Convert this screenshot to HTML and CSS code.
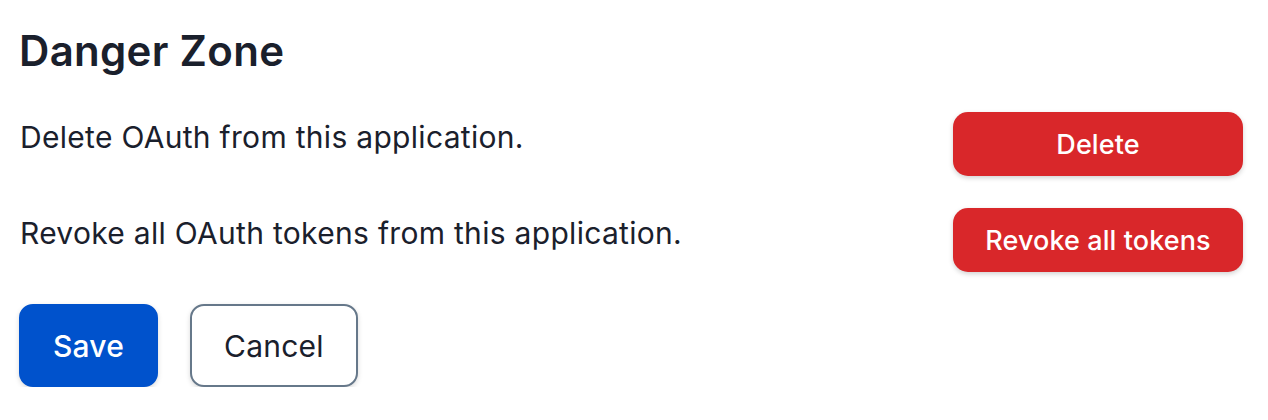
FILE: index.html
```html
<!DOCTYPE html>
<html lang="en">
<head>
<meta charset="utf-8">
<title>Danger Zone</title>
<link rel="stylesheet" href="styles.css">
</head>
<body>
<main class="page">
  <h1 class="title">Danger Zone</h1>
  <div class="row">
    <p class="desc">Delete OAuth from this application.</p>
    <button class="btn-danger" type="button">Delete</button>
  </div>
  <div class="row">
    <p class="desc">Revoke all OAuth tokens from this application.</p>
    <button class="btn-danger" type="button">Revoke all tokens</button>
  </div>
  <div class="actions">
    <button class="btn btn-primary" type="button">Save</button>
    <button class="btn btn-secondary" type="button">Cancel</button>
  </div>
</main>
</body>
</html>
```
FILE: styles.css
```css
* { box-sizing: border-box; }
html, body { margin: 0; background: #ffffff; }
body {
  font-family: Inter, "Noto Sans", "Liberation Sans", sans-serif;
  color: #1a202c;
}
.page {
  padding: 27px 25px 0 19px;
}
.title {
  margin: 0;
  font-size: 42px;
  line-height: 48px;
  font-weight: 600;
  letter-spacing: 0.3px;
}
.row {
  display: flex;
  justify-content: space-between;
  align-items: flex-start;
  margin-top: 37px;
}
.row + .row { margin-top: 32px; }
.desc {
  margin: 3px 0 0 1px;
  font-size: 30px;
  line-height: 45px;
  letter-spacing: 0.3px;
}
.btn-danger {
  width: 290px;
  height: 64px;
  border: none;
  border-radius: 15px;
  background: #d9272a;
  color: #ffffff;
  font-family: inherit;
  font-size: 27px;
  font-weight: 500;
  letter-spacing: 0.1px;
  box-shadow: 0 2px 5px rgba(0, 0, 0, 0.18);
}
.actions {
  display: flex;
  gap: 32px;
  margin-top: 32px;
}
.btn {
  height: 83px;
  padding: 0 32px;
  border: 2px solid transparent;
  border-radius: 14px;
  font-family: inherit;
  font-size: 30px;
  letter-spacing: 0.2px;
  box-shadow: 0 2px 5px rgba(0, 0, 0, 0.15);
}
.btn-primary {
  background: #0052cc;
  border-color: #0052cc;
  color: #ffffff;
  font-weight: 500;
}
.btn-secondary {
  background: #ffffff;
  border-color: #66788a;
  color: #1a202c;
}
```
